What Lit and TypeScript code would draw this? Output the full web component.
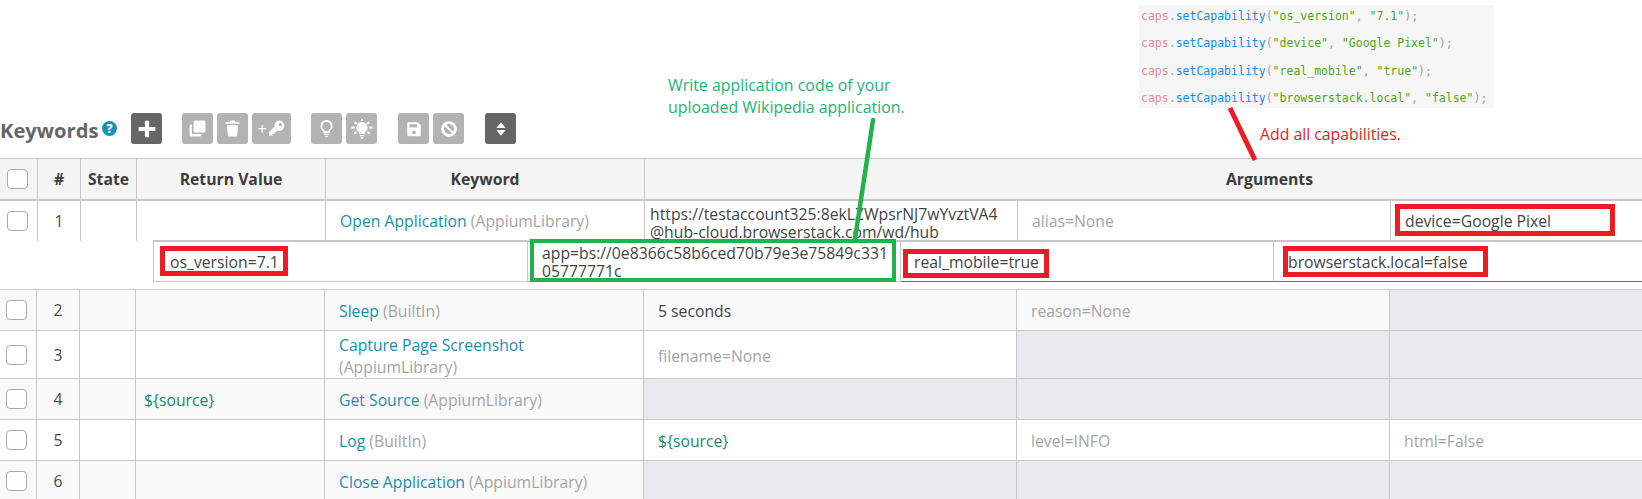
import { LitElement, html, css, svg } from "lit";
import { customElement } from "lit/decorators.js";

const ic = (w: number, body: unknown, vb = "0 0 24 24") =>
  html`<svg width=${w} height=${w} viewBox=${vb} fill="#fff">${body}</svg>`;

const icons = {
  plus: ic(20, svg`<path d="M9.500 2h5v7.500H22v5h-7.500V22h-5v-7.500H2v-5h7.500z"/>`),
  copy: ic(19, svg`<path d="M9 2h11a2 2 0 0 1 2 2v11a2 2 0 0 1-2 2H9a2 2 0 0 1-2-2V4a2 2 0 0 1 2-2z"/><path d="M5 7v11a1 1 0 0 0 1 1h11v1a2 2 0 0 1-2 2H4a2 2 0 0 1-2-2V9a2 2 0 0 1 2-2z"/>`),
  trash: ic(19, svg`<path d="M9 2h6l1 2h5v2H3V4h5z"/><path d="M5 8h14l-1 13a1.500 1.500 0 0 1-1.500 1H7.500A1.500 1.500 0 0 1 6 21z"/>`),
  key: ic(19, svg`<path fill-rule="evenodd" d="M15.500 2a6.500 6.500 0 1 1-2.200 12.600L11 17H9v2H7v2H2.500v-4.500l7-6.800A6.500 6.500 0 0 1 15.500 2zm1.500 3a2 2 0 1 0 0 4 2 2 0 0 0 0-4z"/>`),
  bulb: ic(19, svg`<path fill="none" stroke="#fff" stroke-width="2.200" d="M12 2.500a6.500 6.500 0 0 0-4 11.600c.8.700 1 1.500 1 2.400h6c0-.9.200-1.700 1-2.400a6.500 6.500 0 0 0-4-11.600z"/><path d="M9 18.500h6v1.500H9zM10 21h4v1.500h-4z"/>`),
  bug: ic(22, svg`<path d="M12 4.500a6 6 0 0 0-4 10.500c.7.700 1 1.500 1 2.500h6c0-1 .3-1.800 1-2.500a6 6 0 0 0-4-10.500zM9.500 18.500h5V20h-5zM10.500 20.800h3v1.500h-3z"/><path stroke="#fff" stroke-width="2.200" d="M12 1v2M4 4.500l2.500 1.800M20 4.500l-2.500 1.800M.5 10.500h3.500M20 10.500h3.500M3.500 17l2.500-1.800M20.500 17l-2.500-1.800"/>`),
  save: ic(18, svg`<path fill-rule="evenodd" d="M4 3h13l4 4v13a1.500 1.500 0 0 1-1.500 1.500h-15A1.500 1.500 0 0 1 3 20V4.500A1.500 1.500 0 0 1 4 3zm2 2.500V10h10V5.500zM12 14a2.500 2.500 0 1 0 0 5 2.500 2.500 0 0 0 0-5z"/>`),
  ban: ic(18, svg`<path fill-rule="evenodd" d="M12 1.500a10.500 10.500 0 1 1 0 21 10.500 10.500 0 0 1 0-21zM6.500 8.300a6.700 6.700 0 0 0 9.200 9.200zm2-2l9.200 9.200a6.700 6.700 0 0 0-9.200-9.200z"/>`),
  sort: ic(16, svg`<path d="M12 2l7 8.500H5zM12 22l-7-8.500h14z"/>`),
};

type Cell = { t?: string; kind?: "val" | "ph" | "off" | "var" };
const rows: { n: number; cls: string; ret: string; kw: string; lib: string; args: Cell[] }[] = [
  { n: 2, cls: "r2 alt", ret: "", kw: "Sleep", lib: "(BuiltIn)", args: [{ t: "5 seconds", kind: "val" }, { t: "reason=None", kind: "ph" }, { kind: "off" }] },
  { n: 3, cls: "r3", ret: "", kw: "Capture Page Screenshot", lib: "(AppiumLibrary)", args: [{ t: "filename=None", kind: "ph" }, { kind: "off" }, { kind: "off" }] },
  { n: 4, cls: "r4 alt", ret: "\${source}", kw: "Get Source", lib: "(AppiumLibrary)", args: [{ kind: "off" }, { kind: "off" }, { kind: "off" }] },
  { n: 5, cls: "r4", ret: "", kw: "Log", lib: "(BuiltIn)", args: [{ t: "\${source}", kind: "var" }, { t: "level=INFO", kind: "ph" }, { t: "html=False", kind: "ph" }] },
  { n: 6, cls: "r4 alt", ret: "", kw: "Close Application", lib: "(AppiumLibrary)", args: [{ kind: "off" }, { kind: "off" }, { kind: "off" }] },
];

const code: [string, string][] = [
  ["os_version", "7.1"],
  ["device", "Google Pixel"],
  ["real_mobile", "true"],
  ["browserstack.local", "false"],
];

@customElement("app-root")
export class AppRoot extends LitElement {
  static styles = css`
    :host { display: block; position: relative; width: 1642px; height: 499px; overflow: hidden; background: #fff; font-family: "Open Sans", sans-serif; font-size: 15.75px; color: #4a4a4a; }
    .page { padding-top: 113px; }
    .toolbar { display: flex; align-items: center; height: 31px; }
    .title { font-size: 20.2px; font-weight: 700; color: #666; width: 102px; line-height: 31px; padding-top: 3px; margin-left: -1px; padding-left: 1px; white-space: nowrap; box-sizing: content-box; }
    .help { width: 15px; height: 15px; border-radius: 50%; background: #1a8fb8; color: #fff; font-size: 12px; font-weight: 800; display: flex; align-items: center; justify-content: center; margin-right: 14px; }
    .btn { width: 31px; height: 31px; border-radius: 3px; background: #b3b3b3; display: flex; align-items: center; justify-content: center; margin-right: 4px; color: #fff; font-size: 16px; }
    .btn.dark { background: #666; }
    .btn.wide { width: 39px; }
    .g1 { margin-left: 16px; }
    .g2 { margin-left: 17px; }
    .grid { display: grid; }
    .head { margin-top: 14px; height: 43px; box-sizing: border-box; grid-template-columns: 38px 43px 56px 189px 319px 1fr; border-top: 1px solid #c8c8c8; border-bottom: 2px solid #c8c8c8; background: #f4f4f4; font-weight: 700; color: #3d3d3d; }
    .head > div { border-right: 1px solid #c8c8c8; display: flex; align-items: center; justify-content: center; }
    .head > .boxc { justify-content: flex-start; }
    .head > div:last-child { border-right: 0; padding-left: 252px; }
    .row1 { height: 39px; grid-template-columns: 38px 43px 56px 189px 319px 373px 373px 1fr; }
    .cell { border-right: 1px solid #c8c8c8; display: flex; align-items: center; min-width: 0; box-sizing: border-box; }
    .cell:last-child { border-right: 0; }
    .ctr { justify-content: center; }
    .boxc { justify-content: flex-start; }
    .box { width: 21px; height: 20px; margin-left: 7px; border: 1px solid #aaa; border-radius: 4px; background: #fff; box-sizing: border-box; }
    .row .box { margin-left: 6px; }
    .kw { padding: 0 10px 0 14px; display: block; line-height: 22px; align-self: center; }
    .kwn { color: #1c8dae; }
    .lib { color: #a5a5a5; }
    .arg { color: #444; line-height: 18px; }
    .url { padding-left: 5px; align-items: flex-start; padding-top: 4px; white-space: nowrap; }
    .dev { padding-left: 14px; }
    .ph { padding-left: 14px; color: #a5a5a5; }
    .val { padding-left: 14px; color: #444; }
    .var { padding-left: 14px; color: #188a6b; }
    .ret { padding-left: 8px; color: #188a6b; }
    .row .kw, .row .ph, .row .val, .row .var, .row .ret { padding-top: 2px; }
    .over { display: grid; margin-left: 153px; height: 42px; box-sizing: border-box; grid-template-columns: 374px 373px 373px 1fr; border-left: 1px solid #c8c8c8; border-top: 2px solid #c8c8c8; background: #fff; }
    .over .cell { border-bottom: 1px solid #c8c8c8; }
    .over .d { border-bottom: 1px solid #6f6570; }
    .over .c1 { padding-left: 16px; }
    .over .c2 { padding-left: 14px; white-space: nowrap; }
    .over .c3 { padding-left: 13px; }
    .over .c4 { padding-left: 14px; }
    .under { margin-top: 7px; border-top: 1px solid #c8c8c8; }
    .row { grid-template-columns: 37px 43px 56px 189px 319px 373px 373px 1fr; border-bottom: 1px solid #c8c8c8; box-sizing: border-box; }
    .r2 { height: 41px; }
    .r3 { height: 48px; }
    .r4 { height: 41px; }
    .alt { background: #f9f9f9; }
    .off { background: #e9eaee; }
    .code { position: absolute; left: 1139px; top: 5px; width: 355px; height: 103px; background: #f6f6f6; font-family: "DejaVu Sans Mono", monospace; font-size: 11.5px; line-height: 14px; color: #a0a0a0; display: flex; flex-direction: column; gap: 13.3px; padding: 4px 0 0 2px; box-sizing: border-box; white-space: pre; }
    .cv { color: #e58a93; }
    .fn { color: #0f8fe8; }
    .st { color: #4fa51e; }
    .note { position: absolute; line-height: 22px; white-space: nowrap; }
    .green { left: 668px; top: 74px; font-size: 15.9px; color: #22b573; }
    .red { left: 1260px; top: 123px; font-size: 15.8px; color: #ed1c24; }
    .mark { position: absolute; box-sizing: border-box; border: 5px solid #ed1c24; }
    .mark.g { border: 4px solid #22b14c; }
    .lines { position: absolute; left: 0; top: 0; pointer-events: none; }
  `;

  render() {
    const marks: [number, number, number, number, string][] = [
      [160, 246, 128, 30, ""],
      [530, 239, 366, 43, "g"],
      [903, 249, 146, 29, ""],
      [1283, 246, 205, 31, ""],
      [1395, 204, 220, 32, ""],
    ];
    return html`
      <div class="page">
        <div class="toolbar">
          <div class="title">Keywords</div>
          <div class="help">?</div>
          <div class="btn dark">${icons.plus}</div>
          <div class="btn g1">${icons.copy}</div>
          <div class="btn">${icons.trash}</div>
          <div class="btn wide"><span>+</span>${icons.key}</div>
          <div class="btn g1">${icons.bulb}</div>
          <div class="btn">${icons.bug}</div>
          <div class="btn g2">${icons.save}</div>
          <div class="btn">${icons.ban}</div>
          <div class="btn dark g2">${icons.sort}</div>
        </div>
        <div class="grid head">
          <div class="boxc"><span class="box"></span></div><div>#</div><div>State</div><div>Return Value</div><div>Keyword</div><div>Arguments</div>
        </div>
        <div class="grid row1">
          <div class="cell boxc"><span class="box"></span></div>
          <div class="cell ctr">1</div>
          <div class="cell"></div>
          <div class="cell"></div>
          <div class="cell"><div class="kw"><span class="kwn">Open Application</span> <span class="lib">(AppiumLibrary)</span></div></div>
          <div class="cell arg url"><div>https://testaccount325:8ekLZWpsrNJ7wYvztVA4<br />@hub-cloud.browserstack.com/wd/hub</div></div>
          <div class="cell ph">alias=None</div>
          <div class="cell arg dev">device=Google Pixel</div>
        </div>
        <div class="over">
          <div class="cell arg c1">os_version=7.1</div>
          <div class="cell arg c2"><div>app=bs://0e8366c58b6ced70b79e3e75849c331<br />05777771c</div></div>
          <div class="cell arg c3 d">real_mobile=true</div>
          <div class="cell arg c4 d">browserstack.local=false</div>
        </div>
        <div class="under">
          ${rows.map(
            (r) => html`<div class="grid row ${r.cls}">
              <div class="cell boxc"><span class="box"></span></div>
              <div class="cell ctr">${r.n}</div>
              <div class="cell"></div>
              <div class="cell ret">${r.ret}</div>
              <div class="cell"><div class="kw"><span class="kwn">${r.kw}</span> <span class="lib">${r.lib}</span></div></div>
              ${r.args.map((a) => html`<div class="cell ${a.kind}">${a.t ?? ""}</div>`)}
            </div>`
          )}
        </div>
      </div>
      <div class="code">
        ${code.map(
          ([k, v]) => html`<div><span class="cv">caps</span>.<span class="fn">setCapability</span>(<span class="st">"${k}"</span>, <span class="st">"${v}"</span>);</div>`
        )}
      </div>
      <div class="note green">Write application code of your<br />uploaded Wikipedia application.</div>
      <div class="note red">Add all capabilities.</div>
      ${marks.map(
        ([x, y, w, h, c]) => html`<div class="mark ${c}" style="left:${x}px;top:${y}px;width:${w}px;height:${h}px"></div>`
      )}
      <svg class="lines" width="1642" height="499">
        <line x1="873" y1="120" x2="855" y2="239" stroke="#22b14c" stroke-width="4.500" stroke-linecap="round" />
        <line x1="1230" y1="108" x2="1255" y2="160" stroke="#ed1c24" stroke-width="5" />
      </svg>
    `;
  }
}
